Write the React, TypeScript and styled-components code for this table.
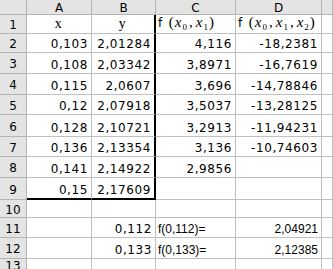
import React from 'react'
import styled, { createGlobalStyle, css } from 'styled-components'

const GlobalStyle = createGlobalStyle`
  html, body {
    margin: 0;
    padding: 0;
    background: #ffffff;
    overflow: hidden;
  }
`

const COLS = '27px 65px 64px 80px 86px 1fr'
const ROWS = [15, 19, 19, 21, 21, 20, 22, 20, 21, 22, 18, 20, 21, 12]

const Sheet = styled.div`
  display: grid;
  grid-template-columns: ${COLS};
  grid-template-rows: ${ROWS.map(h => h + 'px').join(' ')};
  width: 333px;
  height: 269px;
  overflow: hidden;
  font-family: 'DejaVu Sans', sans-serif;
  font-size: 12px;
  color: #000;
`

const HeadCell = styled.div<{ $row?: boolean }>`
  box-sizing: border-box;
  background: #e4e4e4;
  border-right: 1px solid #b4b4b4;
  border-bottom: 1px solid #b4b4b4;
  display: flex;
  align-items: center;
  justify-content: center;
  font-size: 12px;
  line-height: 1;
  padding-top: ${p => (p.$row ? '2px' : '1px')};
`

const Cell = styled.div<{
  $align?: 'left' | 'right' | 'center'
  $thickRight?: boolean
  $thickBottom?: boolean
  $arial?: boolean
}>`
  box-sizing: border-box;
  display: flex;
  align-items: flex-end;
  justify-content: ${p =>
    p.$align === 'left' ? 'flex-start' : p.$align === 'center' ? 'center' : 'flex-end'};
  padding: 0 3px 2px 2px;
  white-space: nowrap;
  overflow: visible;
  border-right: 1px solid #c0c0c0;
  border-bottom: 1px solid #c0c0c0;
  line-height: 1;
  letter-spacing: 0.6px;
  ${p =>
    p.$thickRight &&
    css`
      border-right: 2px solid #000;
    `}
  ${p =>
    p.$thickBottom &&
    css`
      border-bottom: 2px solid #000;
    `}
  ${p =>
    p.$arial &&
    css`
      font-family: 'Liberation Sans', Arial, sans-serif;
      font-size: 12px;
      letter-spacing: 0;
    `}
`

const Letter = styled.span`
  font-family: 'Liberation Serif', 'Times New Roman', serif;
  font-size: 14px;
`

const Formula = styled.span`
  display: inline-flex;
  align-items: baseline;
  padding-bottom: 1px;
`

const F = styled.span`
  font-family: 'DejaVu Sans', sans-serif;
  font-size: 12px;
  margin-right: 6px;
`

const Eq = styled.span`
  font-family: 'Liberation Serif', 'Times New Roman', serif;
  font-size: 15px;
  letter-spacing: 1px;
`

const Var = styled.i`
  font-style: italic;
`

const Sub = styled.sub`
  font-size: 9px;
  vertical-align: -3px;
  line-height: 0;
`

const Comma = styled.span`
  margin: 0 2px 0 1px;
`

function Args({ n }: { n: number }) {
  return (
    <Eq>
      (
      {Array.from({ length: n }, (_, i) => (
        <React.Fragment key={i}>
          {i > 0 && <Comma>,</Comma>}
          <Var>x</Var>
          <Sub>{i}</Sub>
        </React.Fragment>
      ))}
      )
    </Eq>
  )
}

const xs = ['0,103', '0,108', '0,115', '0,12', '0,128', '0,136', '0,141', '0,15']
const ys = ['2,01284', '2,03342', '2,0607', '2,07918', '2,10721', '2,13354', '2,14922', '2,17609']
const d1 = ['4,116', '3,8971', '3,696', '3,5037', '3,2913', '3,136', '2,9856']
const d2 = ['-18,2381', '-16,7619', '-14,78846', '-13,28125', '-11,94231', '-10,74603']

export default function App() {
  const rows: React.ReactNode[] = []

  rows.push(
    <React.Fragment key='h'>
      <HeadCell />
      {['A', 'B', 'C', 'D', ''].map(c => (
        <HeadCell key={c}>{c}</HeadCell>
      ))}
    </React.Fragment>
  )

  rows.push(
    <React.Fragment key='r1'>
      <HeadCell $row>1</HeadCell>
      <Cell $align='center'>
        <Letter>x</Letter>
      </Cell>
      <Cell $align='center' $thickRight>
        <Letter>y</Letter>
      </Cell>
      <Cell $align='left'>
        <Formula>
          <F>f</F>
          <Args n={2} />
        </Formula>
      </Cell>
      <Cell $align='left'>
        <Formula>
          <F>f</F>
          <Args n={3} />
        </Formula>
      </Cell>
      <Cell />
    </React.Fragment>
  )

  for (let i = 0; i < 8; i++) {
    const last = i === 7
    rows.push(
      <React.Fragment key={'d' + i}>
        <HeadCell $row>{i + 2}</HeadCell>
        <Cell $thickBottom={last}>{xs[i]}</Cell>
        <Cell $thickRight $thickBottom={last}>
          {ys[i]}
        </Cell>
        <Cell>{d1[i] ?? ''}</Cell>
        <Cell>{d2[i] ?? ''}</Cell>
        <Cell />
      </React.Fragment>
    )
  }

  rows.push(
    <React.Fragment key='r10'>
      <HeadCell $row>10</HeadCell>
      <Cell />
      <Cell />
      <Cell />
      <Cell />
      <Cell />
    </React.Fragment>
  )

  const interp = [
    ['11', '0,112', 'f(0,112)=', '2,04921'],
    ['12', '0,133', 'f(0,133)=', '2,12385'],
  ]
  interp.forEach(([n, x, label, v]) => {
    rows.push(
      <React.Fragment key={'r' + n}>
        <HeadCell $row>{n}</HeadCell>
        <Cell />
        <Cell>{x}</Cell>
        <Cell $align='left' $arial>
          {label}
        </Cell>
        <Cell $arial>{v}</Cell>
        <Cell />
      </React.Fragment>
    )
  })

  rows.push(
    <React.Fragment key='r13'>
      <HeadCell $row>13</HeadCell>
      <Cell />
      <Cell />
      <Cell />
      <Cell />
      <Cell />
    </React.Fragment>
  )

  return (
    <>
      <GlobalStyle />
      <Sheet>{rows}</Sheet>
    </>
  )
}
